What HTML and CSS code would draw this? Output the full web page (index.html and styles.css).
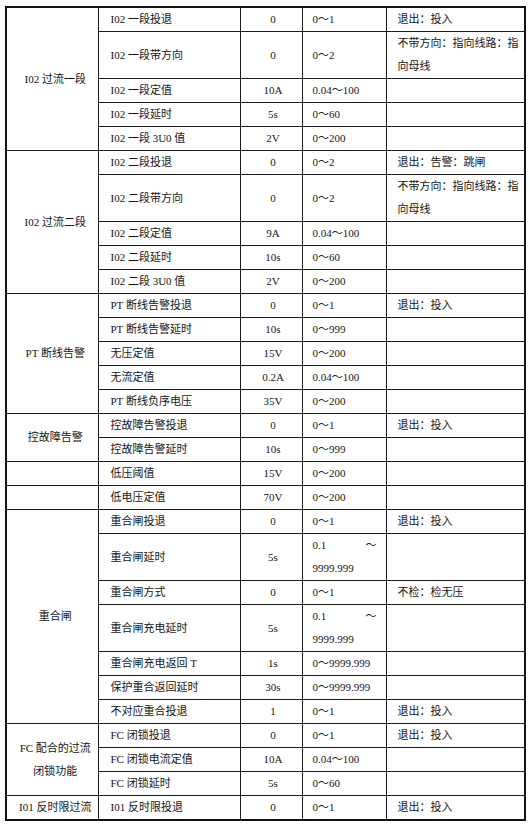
FILE: index.html
```html
<!DOCTYPE html>
<html lang="zh-CN">
<head>
<meta charset="utf-8">
<title>定值表</title>
<link rel="stylesheet" href="styles.css">
</head>
<body>
<table class="spec">
  <colgroup>
    <col class="c1"><col class="c2"><col class="c3"><col class="c4"><col class="c5">
  </colgroup>
  <tbody>
    <tr><td class="grp" rowspan="5">I02 过流一段</td><td class="name">I02 一段投退</td><td class="val">0</td><td class="rng">0～1</td><td class="note">退出：投入</td></tr>
    <tr><td class="name">I02 一段带方向</td><td class="val">0</td><td class="rng">0～2</td><td class="note">不带方向：指向线路：指<br>向母线</td></tr>
    <tr><td class="name">I02 一段定值</td><td class="val">10A</td><td class="rng">0.04～100</td><td class="note"></td></tr>
    <tr><td class="name">I02 一段延时</td><td class="val">5s</td><td class="rng">0～60</td><td class="note"></td></tr>
    <tr><td class="name">I02 一段 3U0 值</td><td class="val">2V</td><td class="rng">0～200</td><td class="note"></td></tr>

    <tr><td class="grp" rowspan="5">I02 过流二段</td><td class="name">I02 二段投退</td><td class="val">0</td><td class="rng">0～2</td><td class="note">退出：告警：跳闸</td></tr>
    <tr><td class="name">I02 二段带方向</td><td class="val">0</td><td class="rng">0～2</td><td class="note">不带方向：指向线路：指<br>向母线</td></tr>
    <tr><td class="name">I02 二段定值</td><td class="val">9A</td><td class="rng">0.04～100</td><td class="note"></td></tr>
    <tr><td class="name">I02 二段延时</td><td class="val">10s</td><td class="rng">0～60</td><td class="note"></td></tr>
    <tr><td class="name">I02 二段 3U0 值</td><td class="val">2V</td><td class="rng">0～200</td><td class="note"></td></tr>

    <tr><td class="grp" rowspan="5">PT 断线告警</td><td class="name">PT 断线告警投退</td><td class="val">0</td><td class="rng">0～1</td><td class="note">退出：投入</td></tr>
    <tr><td class="name">PT 断线告警延时</td><td class="val">10s</td><td class="rng">0～999</td><td class="note"></td></tr>
    <tr><td class="name">无压定值</td><td class="val">15V</td><td class="rng">0～200</td><td class="note"></td></tr>
    <tr><td class="name">无流定值</td><td class="val">0.2A</td><td class="rng">0.04～100</td><td class="note"></td></tr>
    <tr><td class="name">PT 断线负序电压</td><td class="val">35V</td><td class="rng">0～200</td><td class="note"></td></tr>

    <tr><td class="grp" rowspan="2">控故障告警</td><td class="name">控故障告警投退</td><td class="val">0</td><td class="rng">0～1</td><td class="note">退出：投入</td></tr>
    <tr><td class="name">控故障告警延时</td><td class="val">10s</td><td class="rng">0～999</td><td class="note"></td></tr>

    <tr><td class="grp"></td><td class="name">低压阈值</td><td class="val">15V</td><td class="rng">0～200</td><td class="note"></td></tr>
    <tr><td class="grp"></td><td class="name">低电压定值</td><td class="val">70V</td><td class="rng">0～200</td><td class="note"></td></tr>

    <tr><td class="grp" rowspan="7">重合闸</td><td class="name">重合闸投退</td><td class="val">0</td><td class="rng">0～1</td><td class="note">退出：投入</td></tr>
    <tr><td class="name">重合闸延时</td><td class="val">5s</td><td class="rng"><span class="split"><span>0.1</span><span>～</span></span>9999.999</td><td class="note"></td></tr>
    <tr><td class="name">重合闸方式</td><td class="val">0</td><td class="rng">0～1</td><td class="note">不检：检无压</td></tr>
    <tr><td class="name">重合闸充电延时</td><td class="val">5s</td><td class="rng"><span class="split"><span>0.1</span><span>～</span></span>9999.999</td><td class="note"></td></tr>
    <tr><td class="name">重合闸充电返回 T</td><td class="val">1s</td><td class="rng">0～9999.999</td><td class="note"></td></tr>
    <tr><td class="name">保护重合返回延时</td><td class="val">30s</td><td class="rng">0～9999.999</td><td class="note"></td></tr>
    <tr><td class="name">不对应重合投退</td><td class="val">1</td><td class="rng">0～1</td><td class="note">退出：投入</td></tr>

    <tr><td class="grp" rowspan="3">FC 配合的过流<br>闭锁功能</td><td class="name">FC 闭锁投退</td><td class="val">0</td><td class="rng">0～1</td><td class="note">退出：投入</td></tr>
    <tr><td class="name">FC 闭锁电流定值</td><td class="val">10A</td><td class="rng">0.04～100</td><td class="note"></td></tr>
    <tr><td class="name">FC 闭锁延时</td><td class="val">5s</td><td class="rng">0～60</td><td class="note"></td></tr>

    <tr><td class="grp">I01 反时限过流</td><td class="name">I01 反时限投退</td><td class="val">0</td><td class="rng">0～1</td><td class="note">退出：投入</td></tr>
  </tbody>
</table>
</body>
</html>
```

FILE: styles.css
```css
html, body {
  margin: 0;
  padding: 0;
  background: #ffffff;
}

body {
  font-family: "Liberation Serif", "Noto Sans CJK SC", serif;
  font-size: 11px;
  color: #151515;
}

.spec {
  margin: 6px 0 0 5px;
  width: 521px;
  border-collapse: collapse;
  table-layout: fixed;
  border: 2px solid #111;
}

.c1 { width: 92px; }
.c2 { width: 142px; }
.c3 { width: 62px; }
.c4 { width: 84px; }
.c5 { width: 139px; }

.spec td {
  border: 1px solid #1a1a1a;
  padding: 0;
  line-height: 23px;
  vertical-align: middle;
  white-space: nowrap;
}

.spec .grp {
  text-align: center;
  padding-left: 6px;
}

.spec .name {
  padding-left: 12px;
}

.spec .val {
  text-align: center;
  padding-left: 4px;
}

.spec .rng {
  padding-left: 10px;
  padding-right: 9px;
}

.spec .note {
  padding-left: 11px;
  padding-right: 6px;
}

.split {
  display: flex;
  justify-content: space-between;
}
```
